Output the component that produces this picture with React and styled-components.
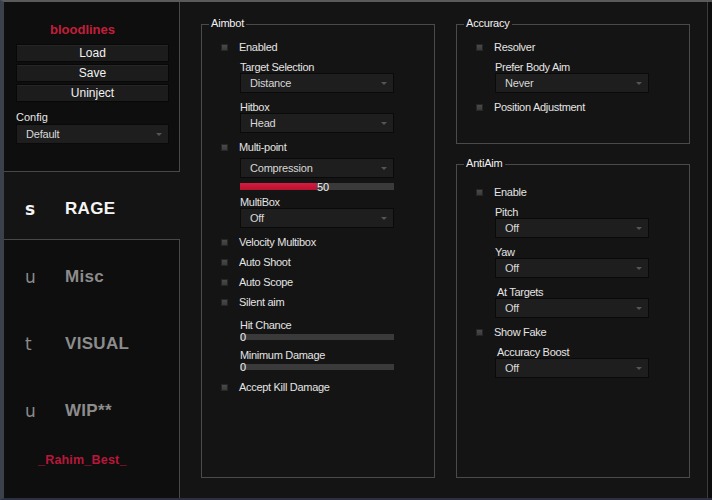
import styled, { createGlobalStyle } from "styled-components";

const GlobalStyle = createGlobalStyle`
    html, body {
        margin: 0;
        padding: 0;
        background: #1c1f27;
    }
    body {
        font-family: "Liberation Sans", Arial, sans-serif;
    }
    * {
        box-sizing: border-box;
    }
`;

const tabs = [
    { icon: "s", name: "RAGE", active: true },
    { icon: "u", name: "Misc" },
    { icon: "t", name: "VISUAL" },
    { icon: "u", name: "WIP**" },
];

function Checkbox({ label, mt = 0 }) {
    return (
        <CheckRow $mt={mt}>
            <Check />
            <CheckText>{label}</CheckText>
        </CheckRow>
    );
}

function Dropdown({ label, value, mt = 0, lx = 0 }) {
    return (
        <Field $mt={mt}>
            {label && <FieldLabel $lx={lx}>{label}</FieldLabel>}
            <Select>
                <span>{value}</span>
                <Arrow />
            </Select>
        </Field>
    );
}

function Slider({ label, value, max = 100, height = 6, mt = 0 }) {
    const pct = (value / max) * 100;
    return (
        <Field $mt={mt}>
            {label && <FieldLabel>{label}</FieldLabel>}
            <Track $h={height} $mt={label ? 3 : 0}>
                <Fill style={{ width: `${pct}%` }} />
                <TrackValue style={{ left: `${pct}%` }}>{value}</TrackValue>
            </Track>
        </Field>
    );
}

function App() {
    return (
        <>
            <GlobalStyle />
            <Window>
                <Sidebar>
                    <ConfigBox>
                        <Brand>bloodlines</Brand>
                        <SideButton>Load</SideButton>
                        <SideButton>Save</SideButton>
                        <SideButton>Uninject</SideButton>
                        <ConfigLabel>Config</ConfigLabel>
                        <Select $w={153}>
                            <span>Default</span>
                            <Arrow />
                        </Select>
                    </ConfigBox>
                    <Tab $active>
                        <TabIcon $active>{tabs[0].icon}</TabIcon>
                        <TabName $active>{tabs[0].name}</TabName>
                    </Tab>
                    <TabsBox>
                        {tabs.slice(1).map((t) => (
                            <Tab key={t.name}>
                                <TabIcon>{t.icon}</TabIcon>
                                <TabName>{t.name}</TabName>
                            </Tab>
                        ))}
                        <Credit>_Rahim_Best_</Credit>
                    </TabsBox>
                </Sidebar>

                <Content>
                    <GroupBox $h={454} $pt={12}>
                        <Legend>Aimbot</Legend>
                        <Checkbox label="Enabled" />
                        <Dropdown label="Target Selection" value="Distance" mt={4} />
                        <Dropdown label="Hitbox" value="Head" mt={8} />
                        <Checkbox label="Multi-point" mt={4} />
                        <Dropdown value="Compression" mt={1} />
                        <Slider value={50} height={7} mt={5} />
                        <Dropdown label="MultiBox" value="Off" mt={6} />
                        <Checkbox label="Velocity Multibox" mt={4} />
                        <Checkbox label="Auto Shoot" />
                        <Checkbox label="Auto Scope" />
                        <Checkbox label="Silent aim" />
                        <Slider label="Hit Chance" value={0} mt={7} />
                        <Slider label="Minimum Damage" value={0} mt={9} />
                        <Checkbox label="Accept Kill Damage" mt={7} />
                    </GroupBox>

                    <Column>
                        <GroupBox $h={120} $pt={12}>
                            <Legend>Accuracy</Legend>
                            <Checkbox label="Resolver" />
                            <Dropdown label="Prefer Body Aim" value="Never" mt={4} />
                            <Checkbox label="Position Adjustment" mt={4} />
                        </GroupBox>
                        <GroupBox $h={314} $pt={17}>
                            <Legend>AntiAim</Legend>
                            <Checkbox label="Enable" />
                            <Dropdown label="Pitch" value="Off" mt={4} />
                            <Dropdown label="Yaw" value="Off" mt={8} />
                            <Dropdown label="At Targets" value="Off" mt={8} lx={2} />
                            <Checkbox label="Show Fake" mt={4} />
                            <Dropdown label="Accuracy Boost" value="Off" mt={4} lx={2} />
                        </GroupBox>
                    </Column>
                </Content>
            </Window>
        </>
    );
}

const Window = styled.div`
    width: 712px;
    height: 500px;
    display: flex;
    background: #0d0d0d;
    border-top: 2px solid #5a5a5a;
    border-left: 4px solid #3b414b;
    border-bottom: 2px solid #2b3142;
`;

const Sidebar = styled.div`
    width: 176px;
    display: flex;
    flex-direction: column;
    background: #141414;
`;

const ConfigBox = styled.div`
    height: 170px;
    display: flex;
    flex-direction: column;
    padding: 20px 0 0 12px;
    background: #0e0e0e;
    border-right: 1px solid #484848;
    border-bottom: 1px solid #484848;
`;

const Brand = styled.div`
    margin: 0 0 6px 34px;
    font-size: 13px;
    font-weight: bold;
    line-height: 16px;
    color: #c41e3a;
`;

const SideButton = styled.div`
    width: 153px;
    height: 18px;
    margin-bottom: 2px;
    display: flex;
    align-items: center;
    justify-content: center;
    background: #1c1c1c;
    border: 1px solid #080808;
    box-shadow: inset 0 1px 0 #262626;
    color: #f2f2f2;
    font-size: 12px;
`;

const ConfigLabel = styled.div`
    margin: 7px 0 1px;
    font-size: 11px;
    line-height: 12px;
    color: #e6e6e6;
`;

const Tab = styled.div`
    height: 67px;
    flex-shrink: 0;
    display: flex;
    align-items: center;
    padding: 7px 0 0 21px;
`;

const TabIcon = styled.span`
    width: 40px;
    font-family: "DejaVu Sans", sans-serif;
    font-size: 17px;
    font-weight: ${(p) => (p.$active ? "bold" : "normal")};
    color: ${(p) => (p.$active ? "#f4f4f4" : "#8a8a8a")};
`;

const TabName = styled.span`
    font-size: 17px;
    font-weight: bold;
    letter-spacing: 0.3px;
    color: ${(p) => (p.$active ? "#f4f4f4" : "#8c8c8c")};
`;

const TabsBox = styled.div`
    flex: 1;
    display: flex;
    flex-direction: column;
    background: #0e0e0e;
    border-top: 1px solid #484848;
    border-right: 1px solid #484848;
`;

const Credit = styled.div`
    margin: 11px 0 0 34px;
    font-size: 12.5px;
    font-weight: bold;
    line-height: 16px;
    letter-spacing: 0.2px;
    color: #b8173a;
`;

const Content = styled.div`
    width: 528px;
    display: flex;
    gap: 21px;
    padding: 22px 17px 0 21px;
    background: #141414;
    border-right: 1px solid #3c3c3c;
`;

const Column = styled.div`
    display: flex;
    flex-direction: column;
    gap: 20px;
`;

const GroupBox = styled.div`
    position: relative;
    width: 234px;
    height: ${(p) => p.$h}px;
    padding-top: ${(p) => p.$pt}px;
    border: 1px solid #4a4a4a;
    display: flex;
    flex-direction: column;
`;

const Legend = styled.div`
    position: absolute;
    top: -8px;
    left: 7px;
    padding: 0 2px;
    background: #141414;
    font-size: 11px;
    line-height: 12px;
    letter-spacing: -0.2px;
    color: #f2f2f2;
`;

const CheckRow = styled.div`
    height: 20px;
    flex-shrink: 0;
    display: flex;
    align-items: center;
    padding-left: 19px;
    margin-top: ${(p) => p.$mt}px;
`;

const Check = styled.span`
    width: 7px;
    height: 7px;
    background: linear-gradient(#4a4a4a, #3a3a3a);
    border: 1px solid #262626;
`;

const CheckText = styled.span`
    margin-left: 11px;
    font-size: 11px;
    letter-spacing: -0.3px;
    color: #e4e4e4;
`;

const Field = styled.div`
    flex-shrink: 0;
    padding-left: 38px;
    margin-top: ${(p) => p.$mt}px;
`;

const FieldLabel = styled.div`
    height: 12px;
    padding-left: ${(p) => p.$lx || 0}px;
    font-size: 11px;
    line-height: 12px;
    letter-spacing: -0.3px;
    color: #e4e4e4;
`;

const Select = styled.div`
    width: ${(p) => p.$w || 154}px;
    height: 20px;
    display: flex;
    align-items: center;
    padding: 0 6px 0 9px;
    background: #1e1e1e;
    border: 1px solid #0a0a0a;
    font-size: 11px;
    letter-spacing: -0.2px;
    color: #d8d8d8;
`;

const Arrow = styled.span`
    margin-left: auto;
    width: 0;
    height: 0;
    border-left: 3px solid transparent;
    border-right: 3px solid transparent;
    border-top: 3px solid #555;
`;

const Track = styled.div`
    position: relative;
    width: 154px;
    height: ${(p) => p.$h}px;
    margin-top: ${(p) => p.$mt}px;
    background: #3a3a3a;
`;

const Fill = styled.div`
    height: 100%;
    background: linear-gradient(#d41c40, #b8122f);
`;

const TrackValue = styled.span`
    position: absolute;
    top: 50%;
    transform: translateY(-45%);
    font-size: 11px;
    line-height: 11px;
    color: #f0f0f0;
`;

export default App;
